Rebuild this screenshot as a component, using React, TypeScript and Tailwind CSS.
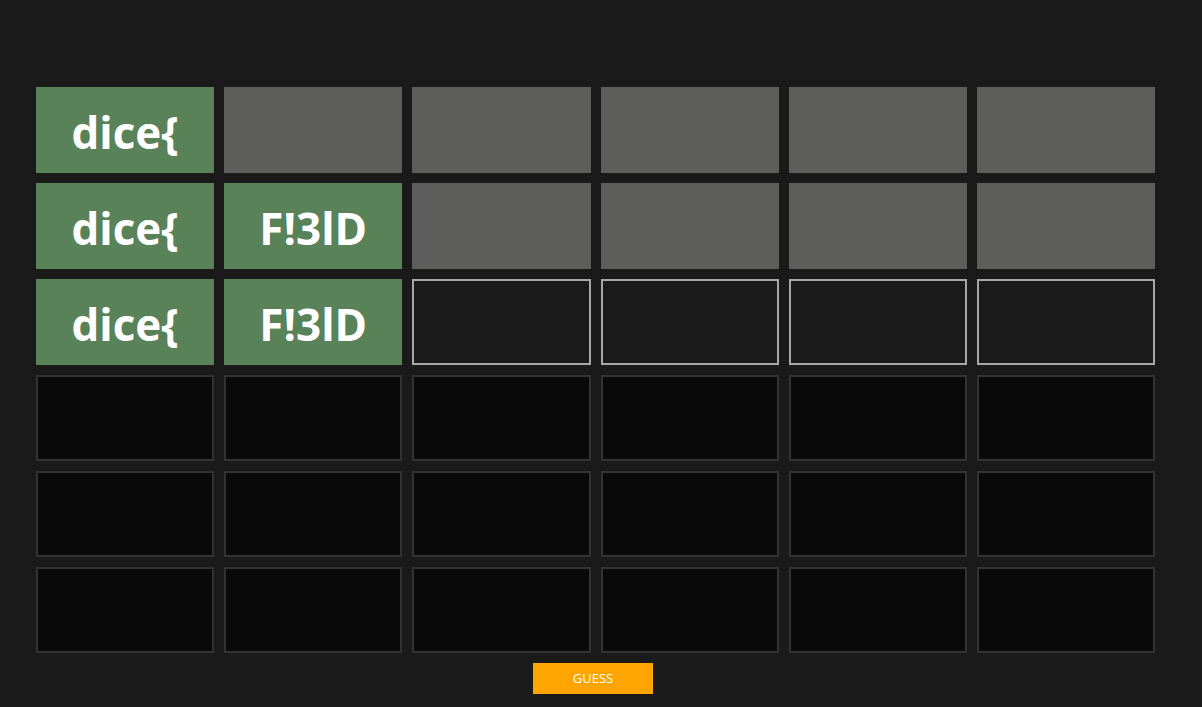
const rows: { text?: string; kind: "green" | "gray" | "active" | "empty" }[][] = [
  [
    { text: "dice{", kind: "green" },
    { kind: "gray" },
    { kind: "gray" },
    { kind: "gray" },
    { kind: "gray" },
    { kind: "gray" },
  ],
  [
    { text: "dice{", kind: "green" },
    { text: "F!3lD", kind: "green" },
    { kind: "gray" },
    { kind: "gray" },
    { kind: "gray" },
    { kind: "gray" },
  ],
  [
    { text: "dice{", kind: "green" },
    { text: "F!3lD", kind: "green" },
    { kind: "active" },
    { kind: "active" },
    { kind: "active" },
    { kind: "active" },
  ],
  ...Array.from({ length: 3 }, () =>
    Array.from({ length: 6 }, () => ({ kind: "empty" as const }))
  ),
];

const cellClass = {
  green: "bg-[#5a8259]",
  gray: "bg-[#5d5d5c]",
  active: "bg-[#1a1a1a] border-2 border-[#a8a8a8]",
  empty: "bg-[#0a0a0a] border-2 border-[#333333]",
};

export default function App() {
  return (
    <div
      className="w-[1202px] h-[707px] bg-[#1a1a1a] overflow-hidden"
      style={{ fontFamily: "'Open Sans', 'Noto Sans', sans-serif" }}
    >
      <div className="pt-[87px] pl-[36px]">
        <div className="grid grid-cols-6 gap-[10px] w-[1119px]">
          {rows.flat().map((c, i) => (
            <div
              key={i}
              className={`h-[86px] flex items-center justify-center pt-[4px] text-white text-[44px] font-bold leading-none ${cellClass[c.kind]}`}
            >
              {c.text}
            </div>
          ))}
        </div>
        <div className="flex pl-[497px] pt-[10px]">
          <button className="w-[120px] h-[31px] bg-[#ffa500] text-white text-[13px] flex items-center justify-center">
            GUESS
          </button>
        </div>
      </div>
    </div>
  );
}
